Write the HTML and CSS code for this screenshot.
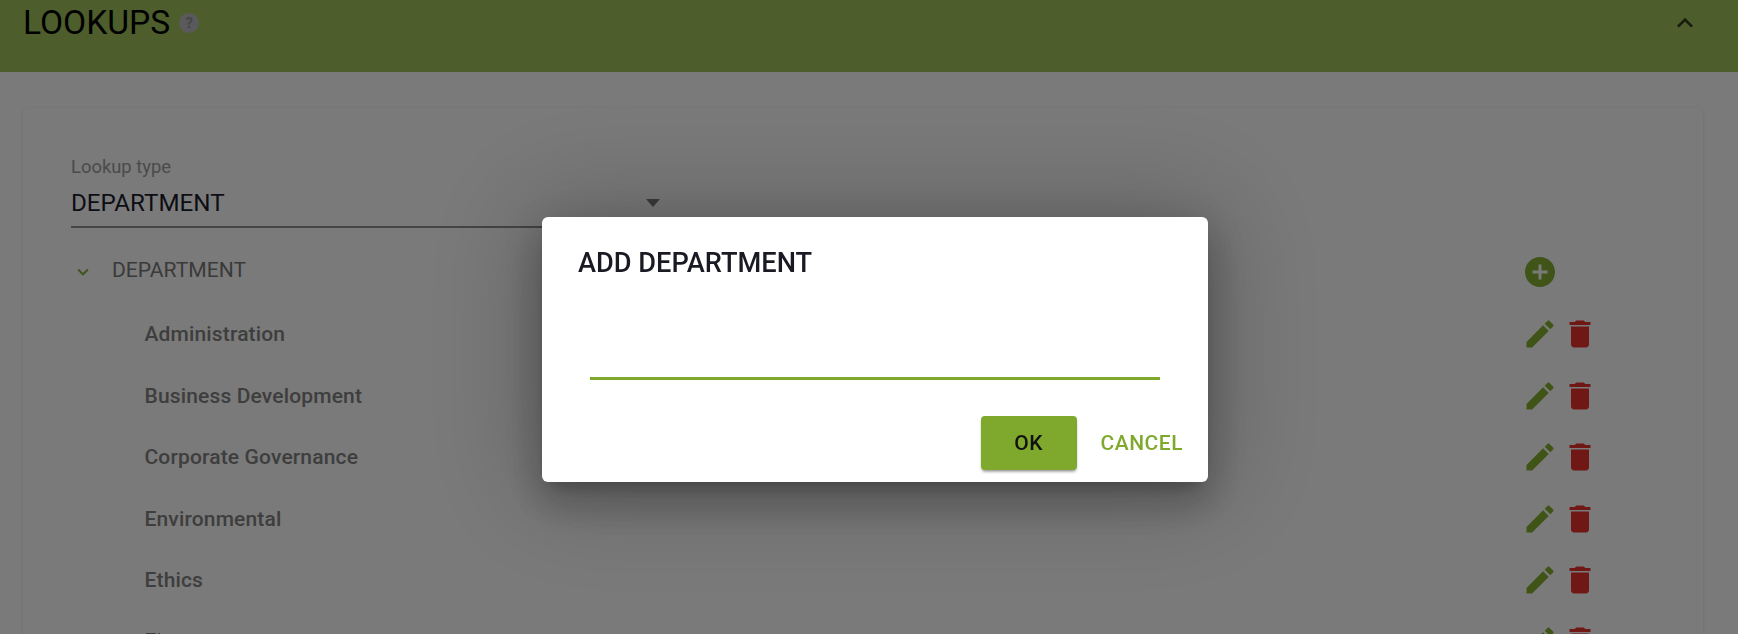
FILE: index.html
```html
<!DOCTYPE html>
<html lang="en">
<head>
<meta charset="utf-8">
<title>Lookups</title>
<link rel="stylesheet" href="styles.css">
</head>
<body>
<div class="page">
  <header class="banner">
    <div class="banner-title">
      <h1>LOOKUPS</h1>
      <span class="help">?</span>
    </div>
    <svg class="collapse" viewBox="0 0 24 24"><path d="M12 8l-6 6 1.41 1.41L12 10.83l4.59 4.58L18 14z"/></svg>
  </header>
  <main class="content">
    <section class="card">
      <div class="field">
        <label class="field-label">Lookup type</label>
        <div class="select"><span>DEPARTMENT</span><i class="select-arrow"></i></div>
      </div>
      <div class="tree">
        <div class="tree-head">
          <svg class="tree-toggle" viewBox="0 0 24 24"><path d="M16.59 8.59L12 13.17 7.41 8.59 6 10l6 6 6-6z"/></svg>
          <span class="tree-name">DEPARTMENT</span>
          <svg class="icon add" viewBox="0 0 24 24"><path d="M12 2C6.48 2 2 6.48 2 12s4.48 10 10 10 10-4.48 10-10S17.52 2 12 2zm5 11h-4v4h-2v-4H7v-2h4V7h2v4h4v2z"/></svg>
        </div>
        <div class="tree-row"><span class="tree-item">Administration</span><svg class="icon edit" viewBox="0 0 24 24"><path d="M3 17.25V21h3.75L17.81 9.94l-3.75-3.75L3 17.25zM20.71 7.04c.39-.39.39-1.02 0-1.41l-2.34-2.34c-.39-.39-1.02-.39-1.41 0l-1.83 1.83 3.75 3.75 1.83-1.83z"/></svg><svg class="icon del" viewBox="0 0 24 24"><path d="M6 19c0 1.1.9 2 2 2h8c1.1 0 2-.9 2-2V7H6v12zM19 4h-3.5l-1-1h-5l-1 1H5v2h14V4z"/></svg></div>
        <div class="tree-row"><span class="tree-item">Business Development</span><svg class="icon edit" viewBox="0 0 24 24"><path d="M3 17.25V21h3.75L17.81 9.94l-3.75-3.75L3 17.25zM20.71 7.04c.39-.39.39-1.02 0-1.41l-2.34-2.34c-.39-.39-1.02-.39-1.41 0l-1.83 1.83 3.75 3.75 1.83-1.83z"/></svg><svg class="icon del" viewBox="0 0 24 24"><path d="M6 19c0 1.1.9 2 2 2h8c1.1 0 2-.9 2-2V7H6v12zM19 4h-3.5l-1-1h-5l-1 1H5v2h14V4z"/></svg></div>
        <div class="tree-row"><span class="tree-item">Corporate Governance</span><svg class="icon edit" viewBox="0 0 24 24"><path d="M3 17.25V21h3.75L17.81 9.94l-3.75-3.75L3 17.25zM20.71 7.04c.39-.39.39-1.02 0-1.41l-2.34-2.34c-.39-.39-1.02-.39-1.41 0l-1.83 1.83 3.75 3.75 1.83-1.83z"/></svg><svg class="icon del" viewBox="0 0 24 24"><path d="M6 19c0 1.1.9 2 2 2h8c1.1 0 2-.9 2-2V7H6v12zM19 4h-3.5l-1-1h-5l-1 1H5v2h14V4z"/></svg></div>
        <div class="tree-row"><span class="tree-item">Environmental</span><svg class="icon edit" viewBox="0 0 24 24"><path d="M3 17.25V21h3.75L17.81 9.94l-3.75-3.75L3 17.25zM20.71 7.04c.39-.39.39-1.02 0-1.41l-2.34-2.34c-.39-.39-1.02-.39-1.41 0l-1.83 1.83 3.75 3.75 1.83-1.83z"/></svg><svg class="icon del" viewBox="0 0 24 24"><path d="M6 19c0 1.1.9 2 2 2h8c1.1 0 2-.9 2-2V7H6v12zM19 4h-3.5l-1-1h-5l-1 1H5v2h14V4z"/></svg></div>
        <div class="tree-row"><span class="tree-item">Ethics</span><svg class="icon edit" viewBox="0 0 24 24"><path d="M3 17.25V21h3.75L17.81 9.94l-3.75-3.75L3 17.25zM20.71 7.04c.39-.39.39-1.02 0-1.41l-2.34-2.34c-.39-.39-1.02-.39-1.41 0l-1.83 1.83 3.75 3.75 1.83-1.83z"/></svg><svg class="icon del" viewBox="0 0 24 24"><path d="M6 19c0 1.1.9 2 2 2h8c1.1 0 2-.9 2-2V7H6v12zM19 4h-3.5l-1-1h-5l-1 1H5v2h14V4z"/></svg></div>
        <div class="tree-row"><span class="tree-item">Finance</span><svg class="icon edit" viewBox="0 0 24 24"><path d="M3 17.25V21h3.75L17.81 9.94l-3.75-3.75L3 17.25zM20.71 7.04c.39-.39.39-1.02 0-1.41l-2.34-2.34c-.39-.39-1.02-.39-1.41 0l-1.83 1.83 3.75 3.75 1.83-1.83z"/></svg><svg class="icon del" viewBox="0 0 24 24"><path d="M6 19c0 1.1.9 2 2 2h8c1.1 0 2-.9 2-2V7H6v12zM19 4h-3.5l-1-1h-5l-1 1H5v2h14V4z"/></svg></div>
      </div>
    </section>
  </main>
</div>
<div class="overlay"></div>
<div class="dialog" role="dialog">
  <h2 class="dialog-title">ADD DEPARTMENT</h2>
  <div class="dialog-input"></div>
  <div class="dialog-actions">
    <button class="btn btn-ok">OK</button>
    <button class="btn btn-cancel">CANCEL</button>
  </div>
</div>
</body>
</html>
```
FILE: styles.css
```css
* { box-sizing: border-box; }
html, body { margin: 0; height: 634px; overflow: hidden; }
body { background: #f5f5f5; font-family: Roboto, "Liberation Sans", sans-serif; color: #000; }
.page { height: 634px; overflow: hidden; }

.banner { height: 72px; background: #9bbb56; display: flex; justify-content: space-between; padding: 0 37px 0 23px; }
.banner-title { display: flex; align-items: center; height: 45px; }
.banner-title h1 { margin: 0; font-size: 33.6px; font-weight: 400; line-height: 45px; color: #000; }
.help { width: 20px; height: 20px; margin: 1px 0 0 9px; border-radius: 50%; background: #b4b4b8; color: #8c8c8c; font-size: 15px; font-weight: 700; line-height: 20px; text-align: center; }
.collapse { width: 32px; height: 32px; margin-top: 7px; fill: rgba(0,0,0,.7); }

.content { padding: 36px 35px 0 23px; }
.card { height: 700px; background: #f4f4f4; border-radius: 5px; box-shadow: 0 1px 4px rgba(0,0,0,.1); padding: 48px 0 0 48px; }

.field { width: 589px; }
.field-label { display: block; font-size: 18.4px; line-height: 21px; color: #969696; }
.select { height: 50.5px; border-bottom: 2px solid #8a8a8a; display: flex; align-items: center; justify-content: space-between; font-size: 24.2px; color: #1a1a2a; padding-top: 4px; }
.select-arrow { width: 0; height: 0; border-left: 7.5px solid transparent; border-right: 7.5px solid transparent; border-top: 8px solid #777; }

.tree { margin-top: 8.1px; padding-right: 105px; }
.tree-head { height: 68.2px; display: flex; align-items: center; }
.tree-toggle { width: 22px; height: 22px; fill: #7fa92c; margin: 4px 0 0 1px; }
.tree-name { margin: 0 0 0 18px; font-size: 21.1px; font-weight: 400; color: #747474; flex: 1; }
.tree-row { height: 61.4px; display: flex; align-items: center; padding-left: 73.5px; }
.tree-item { flex: 1; font-size: 21px; font-weight: 500; color: #7c7c7c; letter-spacing: .15px; }
.icon { width: 36px; height: 36px; flex: none; }
.add { fill: #7fa92c; margin: 4px 40px 0 0; }
.edit { fill: #7fa92c; margin-right: 4px; }
.del { fill: #e0302a; }

.overlay { position: fixed; inset: 0; background: rgba(0,0,0,.5); }
.dialog { position: fixed; left: 542px; top: 217px; width: 666px; height: 265px; background: #fff; border-radius: 6px; padding: 30px 24px 0 36px; box-shadow: 0 11px 15px -7px rgba(0,0,0,.2), 0 24px 38px 3px rgba(0,0,0,.14), 0 9px 46px 8px rgba(0,0,0,.12), 0 0 110px 20px rgba(0,0,0,.18); }
.dialog-title { margin: 0; font-size: 27.2px; font-weight: 500; line-height: 32px; color: #1a1a24; }
.dialog-input { margin: 98px 0 0 12px; width: 570px; height: 3px; background: #7fa92c; }
.dialog-actions { margin-top: 36px; display: flex; justify-content: flex-end; gap: 24px; padding-right: 1px; }
.btn { border: 0; font-family: inherit; font-size: 21px; font-weight: 500; letter-spacing: .5px; cursor: pointer; }
.btn-ok { width: 96px; height: 54px; background: #7fa92c; color: #111; border-radius: 4px; box-shadow: 0 3px 3px -2px rgba(0,0,0,.3), 0 2px 3px rgba(0,0,0,.2); }
.btn-cancel { background: none; padding: 0; color: #7fa92c; height: 54px; }
```
